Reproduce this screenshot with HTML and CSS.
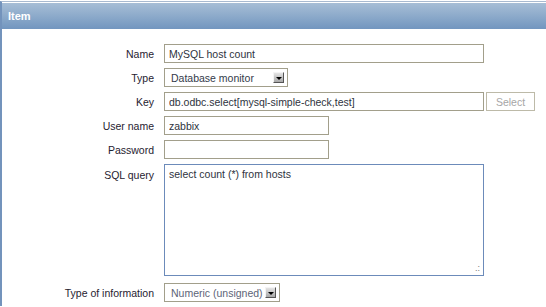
FILE: index.html
```html
<!DOCTYPE html>
<html lang="en">

<head>
    <meta charset="UTF-8">
    <title>Item</title>
    <link rel="stylesheet" href="styles.css">
</head>

<body>
    <div class="page">
        <div class="header">Item</div>

        <div class="form">
            <div class="label">Name</div>
            <div class="field">
                <input class="text wide" type="text" value="MySQL host count">
            </div>

            <div class="label">Type</div>
            <div class="field">
                <div class="select type-select">
                    <span class="select-value">Database monitor</span>
                    <span class="arrow"></span>
                </div>
            </div>

            <div class="label">Key</div>
            <div class="field">
                <input class="text wide" type="text" value="db.odbc.select[mysql-simple-check,test]">
                <button class="select-button">Select</button>
            </div>

            <div class="label">User name</div>
            <div class="field">
                <input class="text short" type="text" value="zabbix">
            </div>

            <div class="label">Password</div>
            <div class="field">
                <input class="text short" type="password" value="">
            </div>

            <div class="label top">SQL query</div>
            <div class="field">
                <div class="query-wrap">
                    <textarea class="query">select count (*) from hosts</textarea>
                    <span class="grip">.:</span>
                </div>
            </div>

            <div class="label last">Type of information</div>
            <div class="field last">
                <div class="select info-select">
                    <span class="select-value muted">Numeric (unsigned)</span>
                    <span class="arrow"></span>
                </div>
            </div>
        </div>
    </div>
</body>

</html>
```

FILE: styles.css
```css
body {
    margin: 0;
    font-family: "Liberation Sans", Arial, sans-serif;
    background-color: #fff;
    color: #1f2230;
}

.page {
    margin-top: 1px;
    border-top: 1px solid #a9bad0;
    border-left: 2px solid #7393bc;
    height: 305px;
    box-sizing: border-box;
}

.header {
    margin-top: 1px;
    height: 26px;
    line-height: 26px;
    padding-left: 6px;
    background: linear-gradient(#a7bed6, #7296bf);
    color: #fff;
    font-size: 11px;
    font-weight: bold;
}

.form {
    display: grid;
    grid-template-columns: 152px auto;
    column-gap: 10px;
    row-gap: 5px;
    align-items: center;
    padding-top: 15px;
    font-size: 10.5px;
}

.label {
    text-align: right;
}

.label.top {
    align-self: start;
    padding-top: 5px;
}

.label.last,
.field.last {
    margin-top: 2px;
}

.field {
    display: flex;
    align-items: center;
    gap: 2px;
}

.text {
    box-sizing: border-box;
    height: 19px;
    border: 1px solid #a29f8b;
    padding: 0 4px;
    font-family: inherit;
    font-size: 10.5px;
    color: #2e3340;
    background: #fff;
    outline: none;
}

.wide {
    width: 320px;
}

.short {
    width: 165px;
}

.select-button {
    box-sizing: border-box;
    width: 49px;
    height: 19px;
    border: 1px solid #bdbaa8;
    background: #fff;
    color: #a6a6a6;
    font-family: inherit;
    font-size: 10.5px;
    padding: 0;
}

.select {
    box-sizing: border-box;
    height: 19px;
    border: 1px solid #a29f8b;
    display: flex;
    align-items: center;
    justify-content: space-between;
    padding: 0 3px 0 6px;
    color: #333a4a;
    background: #fff;
}

.type-select {
    width: 124px;
}

.info-select {
    width: 116px;
}

.select-value.muted {
    color: #5d6477;
}

.arrow {
    width: 11px;
    height: 11px;
    box-sizing: border-box;
    background: linear-gradient(#e4e4e4, #a8a8a8);
    border-right: 1px solid #555;
    border-bottom: 1px solid #555;
    border-top: 1px solid #f4f4f4;
    border-left: 1px solid #f4f4f4;
    display: flex;
    align-items: center;
    justify-content: center;
}

.arrow::after {
    content: "";
    border-left: 3px solid transparent;
    border-right: 3px solid transparent;
    border-top: 3px solid #000;
    margin-top: 1px;
}

.query-wrap {
    position: relative;
}

.query {
    display: block;
    box-sizing: border-box;
    width: 320px;
    height: 112px;
    border: 1px solid #6c8bba;
    padding: 3px 4px;
    font-family: inherit;
    font-size: 10.5px;
    color: #2e3340;
    resize: none;
    outline: none;
}

.grip {
    position: absolute;
    right: 4px;
    bottom: 3px;
    font-size: 9px;
    line-height: 9px;
    color: #777;
}
```
